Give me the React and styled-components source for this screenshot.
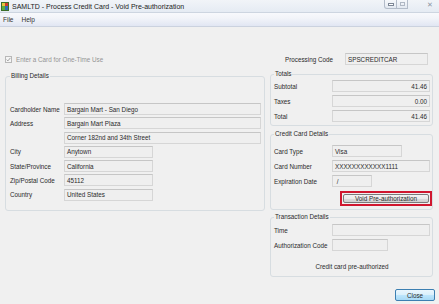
import React from "react";
import styled, { createGlobalStyle } from "styled-components";

const Global = createGlobalStyle`
  html, body { margin: 0; padding: 0; background: #f0f0f0; }
  body { font-family: "Liberation Sans", Arial, sans-serif; }
  * { box-sizing: border-box; }
`;

const Window = styled.div`
  width: 439px;
  height: 304px;
  overflow: hidden;
  display: flex;
  flex-direction: column;
  background: #f0f0f0;
  color: #2a2a2a;
  font-size: 6.3px;
`;

const TitleBar = styled.div`
  height: 13px;
  display: flex;
  align-items: center;
  padding-left: 1px;
  background: linear-gradient(#f1f4f8, #e5ebf3);
  border-bottom: 1px solid #cdd5e0;
`;

const TitleText = styled.span`
  margin-left: 3px;
  font-size: 7px;
  color: #222;
  white-space: nowrap;
`;

const Controls = styled.div`
  margin-left: auto;
  align-self: flex-start;
  display: flex;
`;

const CapBtn = styled.div`
  width: ${(p) => p.$w}px;
  height: 9px;
  border: 1px solid #b3bcc9;
  border-top: none;
  border-left: ${(p) => (p.$first ? "1px solid #b3bcc9" : "none")};
  border-radius: ${(p) => (p.$first ? "0 0 0 3px" : "0")};
  background: linear-gradient(#f6f8fb, #e3e9f1);
  display: flex;
  align-items: center;
  justify-content: center;
`;

const CloseCap = styled.div`
  width: 31px;
  height: 9px;
  display: flex;
  align-items: center;
  justify-content: flex-end;
  padding-right: 6px;
  color: #8d96a3;
  font-size: 7px;
`;

const MenuBar = styled.div`
  height: 14px;
  display: flex;
  align-items: center;
  gap: 8px;
  padding-left: 3px;
  font-size: 6.5px;
  color: #333;
  background: linear-gradient(#f8f9fc 0%, #f2f4f9 40%, #e1e6f3 100%);
  border-bottom: 1px solid #cbd2df;
`;

const Body = styled.div`
  flex: 1;
  display: flex;
  flex-direction: column;
  padding: 26px 6px 0 5px;
`;

const TopRow = styled.div`
  height: 12px;
  display: flex;
  align-items: center;
  justify-content: space-between;
  padding-right: 5px;
`;

const CheckLabel = styled.div`
  display: flex;
  align-items: center;
  gap: 4px;
  color: #949494;
`;

const Inline = styled.div`
  display: flex;
  align-items: center;
`;

const Columns = styled.div`
  display: flex;
  gap: 5px;
  margin-top: 5px;
  align-items: flex-start;
`;

const RightCol = styled.div`
  width: 163px;
  display: flex;
  flex-direction: column;
`;

const Group = styled.fieldset`
  margin: ${(p) => p.$mt || 0}px 0 0 0;
  min-width: 0;
  width: ${(p) => p.$w}px;
  border: 1px solid #d7dde1;
  border-radius: 3px;
  padding: ${(p) => p.$pt}px ${(p) => p.$pr}px ${(p) => p.$pb}px ${(p) => p.$pl}px;
  display: flex;
  flex-direction: column;
  gap: ${(p) => p.$gap}px;
`;

const Legend = styled.legend`
  padding: 0 1px;
  margin: 0;
  font-size: 6.3px;
  line-height: 8px;
  color: #2a2a2a;
`;

const Row = styled.div`
  display: flex;
  align-items: center;
  height: 12px;
`;

const Label = styled.span`
  width: ${(p) => p.$w}px;
  flex: none;
  white-space: nowrap;
`;

const Field = styled.div`
  width: ${(p) => p.$w}px;
  height: 12px;
  flex: none;
  border: 1px solid #d6d6d6;
  border-top-color: #c6c6c6;
  background: #efefef;
  padding: 0 2px;
  display: flex;
  align-items: center;
  justify-content: ${(p) => (p.$right ? "flex-end" : "flex-start")};
  white-space: nowrap;
  overflow: hidden;
  font-size: 6.3px;
  color: #2a2a2a;
`;

const Highlight = styled.div`
  align-self: flex-end;
  margin-right: -2px;
  margin-top: 1px;
  width: 92px;
  height: 15px;
  border: 2px solid #d0172f;
  padding: 1px;
  display: flex;
`;

const Button = styled.button`
  flex: 1;
  margin: 0;
  padding: 0;
  font-family: inherit;
  font-size: 6.3px;
  color: #2a2a2a;
  border: 1px solid #7a7a7a;
  border-radius: 2px;
  background: linear-gradient(#f3f3f3 0%, #ebebeb 50%, #dddddd 51%, #cfcfcf 100%);
  line-height: 7px;
`;

const Status = styled.div`
  margin-top: 9px;
  text-align: center;
  line-height: 8px;
`;

const Footer = styled.div`
  display: flex;
  justify-content: flex-end;
  margin-top: 12px;
  margin-right: -2px;
`;

const CloseButton = styled.button`
  width: 40px;
  height: 12px;
  margin: 0;
  padding: 0;
  font-family: inherit;
  font-size: 6.3px;
  color: #2a2a2a;
  border: 1px solid #3c7fb1;
  border-radius: 2px;
  background: linear-gradient(#eaf6fd 0%, #d9f0fc 50%, #bee6fd 51%, #a7d9f5 100%);
`;

const AppIcon = () => (
  <svg width="8" height="9" viewBox="0 0 8 9">
    <rect x="0" y="0" width="8" height="9" fill="#3b6e2a" />
    <rect x="1" y="1" width="3" height="3" fill="#e3c640" />
    <rect x="4" y="1" width="3" height="3" fill="#cf3b2b" />
    <rect x="1" y="4" width="3" height="4" fill="#5fae3c" />
    <rect x="4" y="4" width="3" height="4" fill="#2f6db5" />
  </svg>
);

const CheckBox = () => (
  <svg width="7" height="7" viewBox="0 0 7 7">
    <rect x="0.5" y="0.5" width="6" height="6" fill="#f5f5f5" stroke="#b8b8b8" />
    <path d="M1.6 3.6 L2.9 4.9 L5.4 1.9" fill="none" stroke="#a0a0a0" strokeWidth="1" />
  </svg>
);

const billing = [
  ["Cardholder Name", "Bargain Mart - San Diego", 197],
  ["Address", "Bargain Mart Plaza", 197],
  ["", "Corner 182nd and 34th Street", 197],
  ["City", "Anytown", 89],
  ["State/Province", "California", 89],
  ["Zip/Postal Code", "45112", 89],
  ["Country", "United States", 89],
];

const totals = [
  ["Subtotal", "41.46"],
  ["Taxes", "0.00"],
  ["Total", "41.46"],
];

export default function App() {
  return (
    <>
      <Global />
      <Window>
        <TitleBar>
          <AppIcon />
          <TitleText>SAMLTD - Process Credit Card - Void Pre-authorization</TitleText>
          <Controls>
            <CapBtn $w={13} $first>
              <svg width="6" height="3" viewBox="0 0 6 3">
                <rect x="0.5" y="0.5" width="5" height="2" fill="#fff" stroke="#7d8796" />
              </svg>
            </CapBtn>
            <CapBtn $w={11}>
              <svg width="5" height="4" viewBox="0 0 5 4">
                <rect x="0.5" y="0.5" width="4" height="3" fill="none" stroke="#b0b8c4" />
              </svg>
            </CapBtn>
            <CloseCap>✕</CloseCap>
          </Controls>
        </TitleBar>
        <MenuBar>
          <span>File</span>
          <span>Help</span>
        </MenuBar>
        <Body>
          <TopRow>
            <CheckLabel>
              <CheckBox />
              <span>Enter a Card for One-Time Use</span>
            </CheckLabel>
            <Inline>
              <Label $w={60}>Processing Code</Label>
              <Field $w={83}>SPSCREDITCAR</Field>
            </Inline>
          </TopRow>
          <Columns>
            <Group $w={260} $mt={2} $pt={23} $pr={3} $pb={9} $pl={4} $gap={2.3}>
              <Legend>Billing Details</Legend>
              {billing.map(([l, v, w], i) => (
                <Row key={i}>
                  <Label $w={54}>{l}</Label>
                  <Field $w={w}>{v}</Field>
                </Row>
              ))}
            </Group>
            <RightCol>
              <Group $pt={2} $pr={2} $pb={3} $pl={3} $gap={3}>
                <Legend>Totals</Legend>
                {totals.map(([l, v]) => (
                  <Row key={l}>
                    <Label $w={58}>{l}</Label>
                    <Field $w={98} $right>{v}</Field>
                  </Row>
                ))}
              </Group>
              <Group $mt={4} $pt={7} $pr={2} $pb={3} $pl={3} $gap={3}>
                <Legend>Credit Card Details</Legend>
                <Row>
                  <Label $w={58}>Card Type</Label>
                  <Field $w={70}>Visa</Field>
                </Row>
                <Row>
                  <Label $w={58}>Card Number</Label>
                  <Field $w={98}>XXXXXXXXXXXX1111</Field>
                </Row>
                <Row>
                  <Label $w={58}>Expiration Date</Label>
                  <Field $w={40}>&nbsp;/</Field>
                </Row>
                <Highlight>
                  <Button>Void Pre-authorization</Button>
                </Highlight>
              </Group>
              <Group $mt={3} $pt={3} $pr={2} $pb={5} $pl={3} $gap={3}>
                <Legend>Transaction Details</Legend>
                <Row>
                  <Label $w={58}>Time</Label>
                  <Field $w={98} />
                </Row>
                <Row>
                  <Label $w={58}>Authorization Code</Label>
                  <Field $w={56} />
                </Row>
                <Status>Credit card pre-authorized</Status>
              </Group>
              <Footer>
                <CloseButton>Close</CloseButton>
              </Footer>
            </RightCol>
          </Columns>
        </Body>
      </Window>
    </>
  );
}
